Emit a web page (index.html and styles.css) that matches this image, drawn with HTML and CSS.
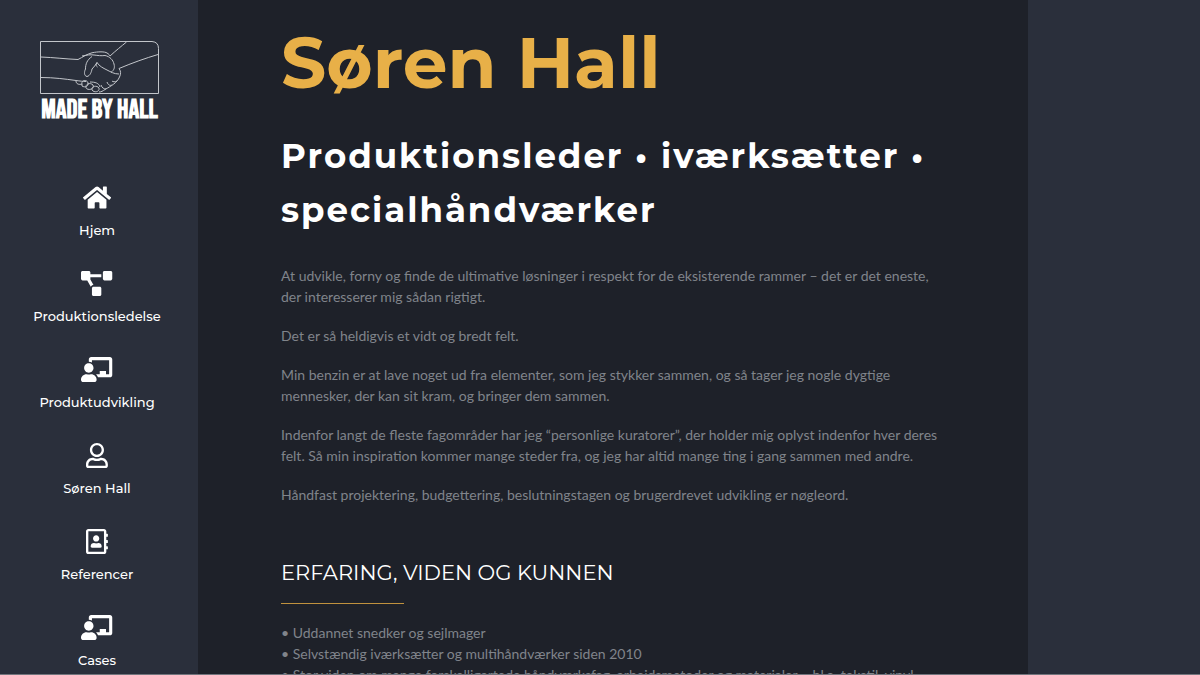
FILE: index.html
```
<!DOCTYPE html>
<html lang="da">
<head>
    <meta charset="UTF-8">
    <meta name="viewport" content="width=device-width, initial-scale=1.0">
    <title>Søren Hall | Made by Hall</title>
    <link rel="stylesheet" href="styles.css">
</head>
<body>
    <div class="layout">
        <aside class="sidebar">
            <a href="#" class="logo">
                <svg class="logo-img" viewBox="0 0 119 53" aria-hidden="true">
                    <path d="M.5 .5H112Q118.500 1 118.500 7.500V52.500H.5Z"/>
                    <path d="M1 16C14 16.500 26 18 38 18.500C43 16 47 13 52 11.800C58 10.500 65 10.500 67 12C69 13 69.500 14 69.500 15"/>
                    <path d="M42 15C47 14 50 13.500 54 14C58 14.500 61 15 65 14.500C70 15.500 73 19 74 23C75 27 74 29 71 31.500"/>
                    <path d="M70 15C76 9.500 81 5.500 86.500 1"/>
                    <path d="M118 13.500C106 17 92 22 79 27.500C81 30 81 33 79.500 36C77 42 71 45 65 48.500C63 50 61 51 59 51"/>
                    <path d="M52 15.500C47 19 45.500 23 45.500 28C44 31 44 35 47 35.500C50 35 51.500 31 52 28C54 26 55.500 24 57 21.500C59 25 63 27 67 29C71 31 74 33 79 33"/>
                    <path d="M57 21.500C55.500 24 56 25 57.500 26"/>
                    <path d="M1 36.500C14 36.500 25 38 36 39.500C40 40 43 40.500 46 40.500"/>
                    <path d="M36 40C36 43 39 44 42 43M42 43C41 39 47 38 48 42C49 45 45 47 42 45V43M46 47C45 43 50 41 53 44C55 48 48 50 46 47M52 49C51 45 57 44 59 47C60 51 54 52 52 49M50 41C55 41 59 42 60 46"/>
                    <path d="M72 40C73 41 75 41 77 40M67 41C68 44 70 45 72 44M61 44C62 47 64 48 66 48"/>
                </svg>
                <span class="logo-text">MADE BY HALL</span>
            </a>

            <nav class="menu">
                <a href="#hjem">
                    <svg viewBox="0 0 576 512" aria-hidden="true"><path d="M280.370 148.260L96 300.110V464a16 16 0 0 0 16 16l112.060-.29a16 16 0 0 0 15.920-16V368a16 16 0 0 1 16-16h64a16 16 0 0 1 16 16v95.640a16 16 0 0 0 16 16.050L464 480a16 16 0 0 0 16-16V300L295.670 148.260a12.190 12.190 0 0 0-15.300 0zM571.600 251.470L488 182.560V44.050a12 12 0 0 0-12-12h-56a12 12 0 0 0-12 12v72.610L318.470 43a48 48 0 0 0-61 0L4.340 251.470a12 12 0 0 0-1.600 16.900l25.500 31A12 12 0 0 0 45.150 301l235.220-193.740a12.190 12.190 0 0 1 15.300 0L530.900 301a12 12 0 0 0 16.900-1.600l25.500-31a12 12 0 0 0-1.700-16.930z"/></svg>
                    <span>Hjem</span>
                </a>
                <a href="#produktionsledelse">
                    <svg viewBox="0 0 640 512" aria-hidden="true"><path d="M384 320H256c-17.670 0-32 14.330-32 32v128c0 17.670 14.330 32 32 32h128c17.670 0 32-14.330 32-32V352c0-17.670-14.330-32-32-32zM192 32c0-17.670-14.330-32-32-32H32C14.330 0 0 14.330 0 32v128c0 17.670 14.330 32 32 32h95.720l73.160 128.040C211.980 300.980 232.400 288 256 288h.28L192 175.510V128h224V64H192V32zM608 0H480c-17.670 0-32 14.330-32 32v128c0 17.670 14.330 32 32 32h128c17.670 0 32-14.330 32-32V32c0-17.670-14.330-32-32-32z"/></svg>
                    <span>Produktionsledelse</span>
                </a>
                <a href="#produktudvikling">
                    <svg viewBox="0 0 640 512" aria-hidden="true"><path d="M208 352c-2.390 0-4.780.35-7.060 1.090C187.980 357.300 174.350 360 160 360s-27.980-2.700-40.950-6.910c-2.280-.74-4.660-1.090-7.050-1.090C49.940 352-.33 402.480 0 464.620.14 490.880 21.730 512 48 512h224c26.270 0 47.860-21.120 48-47.380.33-62.140-49.940-112.620-112-112.620zM160 320c53.020 0 96-42.980 96-96s-42.980-96-96-96-96 42.980-96 96 42.980 96 96 96zM592 0H208c-26.470 0-48 22.250-48 49.590V96c23.420 0 45.100 6.780 64 17.800V64h352v288h-64v-64H384v64h-76.240c19.100 16.690 33.120 38.730 39.690 64H592c26.470 0 48-22.250 48-49.590V49.590C640 22.250 618.470 0 592 0z"/></svg>
                    <span>Produktudvikling</span>
                </a>
                <a href="#soren-hall">
                    <svg viewBox="0 0 448 512" aria-hidden="true"><path d="M313.600 304c-28.700 0-42.500 16-89.600 16s-60.800-16-89.600-16C60.200 304 0 364.200 0 438.400V464c0 26.500 21.500 48 48 48h352c26.500 0 48-21.500 48-48v-25.600c0-74.200-60.200-134.400-134.400-134.400zM400 464H48v-25.600c0-47.600 38.800-86.400 86.400-86.400 14.600 0 38.300 16 89.600 16 51.700 0 74.900-16 89.600-16 47.600 0 86.400 38.800 86.400 86.400V464zM224 288c79.500 0 144-64.500 144-144S303.500 0 224 0 80 64.500 80 144s64.500 144 144 144zm0-240c52.900 0 96 43.100 96 96s-43.100 96-96 96-96-43.100-96-96 43.100-96 96-96z"/></svg>
                    <span>Søren Hall</span>
                </a>
                <a href="#referencer">
                    <svg viewBox="0 0 448 512" aria-hidden="true"><path d="M436 160c6.600 0 12-5.400 12-12v-40c0-6.600-5.400-12-12-12h-20V48c0-26.500-21.500-48-48-48H48C21.500 0 0 21.500 0 48v416c0 26.500 21.500 48 48 48h320c26.500 0 48-21.500 48-48v-48h20c6.600 0 12-5.400 12-12v-40c0-6.600-5.400-12-12-12h-20v-64h20c6.600 0 12-5.400 12-12v-40c0-6.600-5.400-12-12-12h-20v-64h20zm-68 304H48V48h320v416zM208 256c35.300 0 64-28.700 64-64s-28.700-64-64-64-64 28.700-64 64 28.700 64 64 64zm-89.600 128h179.200c12.400 0 22.400-8.600 22.400-19.200v-19.200c0-31.800-30.100-57.600-67.200-57.600-10.800 0-18.700 8-44.800 8-26.900 0-33.400-8-44.800-8-37.100 0-67.200 25.800-67.200 57.600v19.200c0 10.600 10 19.200 22.400 19.200z"/></svg>
                    <span>Referencer</span>
                </a>
                <a href="#cases">
                    <svg viewBox="0 0 640 512" aria-hidden="true"><path d="M208 352c-2.390 0-4.780.35-7.060 1.090C187.980 357.300 174.350 360 160 360s-27.980-2.700-40.950-6.910c-2.280-.74-4.660-1.090-7.050-1.090C49.940 352-.33 402.480 0 464.620.14 490.880 21.730 512 48 512h224c26.270 0 47.860-21.120 48-47.380.33-62.140-49.940-112.620-112-112.620zM160 320c53.020 0 96-42.980 96-96s-42.980-96-96-96-96 42.980-96 96 42.980 96 96 96zM592 0H208c-26.470 0-48 22.250-48 49.590V96c23.420 0 45.100 6.780 64 17.800V64h352v288h-64v-64H384v64h-76.240c19.100 16.690 33.120 38.730 39.690 64H592c26.470 0 48-22.250 48-49.590V49.590C640 22.250 618.470 0 592 0z"/></svg>
                    <span>Cases</span>
                </a>
            </nav>
        </aside>

        <main class="content">
            <h1>Søren Hall</h1>
            <h2>Produktionsleder • iværksætter • specialhåndværker</h2>

            <div class="intro">
                <p>At udvikle, forny og finde de ultimative løsninger i respekt for de eksisterende rammer – det er det eneste, der interesserer mig sådan rigtigt.</p>
                <p>Det er så heldigvis et vidt og bredt felt.</p>
                <p>Min benzin er at lave noget ud fra elementer, som jeg stykker sammen, og så tager jeg nogle dygtige mennesker, der kan sit kram, og bringer dem sammen.</p>
                <p>Indenfor langt de fleste fagområder har jeg “personlige kuratorer”, der holder mig oplyst indenfor hver deres felt. Så min inspiration kommer mange steder fra, og jeg har altid mange ting i gang sammen med andre.</p>
                <p>Håndfast projektering, budgettering, beslutningstagen og brugerdrevet udvikling er nøgleord.</p>
            </div>

            <h3>ERFARING, VIDEN OG KUNNEN</h3>
            <ul class="experience">
                <li>Uddannet snedker og sejlmager</li>
                <li>Selvstændig iværksætter og multihåndværker siden 2010</li>
                <li>Stor viden om mange forskelligartede håndværksfag, arbejdsmetoder og materialer – bl.a. tekstil, vinyl</li>
            </ul>
        </main>
    </div>
</body>
</html>
```
FILE: styles.css
```
:root {
    --bg-side: #2a2f3b;
    --bg-main: #1e2129;
    --gold: #e8b048;
    --text: #80848b;
    --heading-font: Montserrat, Inter, sans-serif;
}
* { box-sizing: border-box; margin: 0; padding: 0; }
body {
    background-color: var(--bg-side);
    color: var(--text);
    font-family: Lato, sans-serif;
    font-size: 14px;
    line-height: 21px;
}
/* thin line along the bottom of the window */
body::after {
    content: ""; position: fixed; left: 0; right: 0; bottom: 0;
    height: 1px; background-color: #72757d;
}
.layout { display: flex; height: 100vh; overflow: hidden; }

.sidebar { flex: 0 0 198px; padding: 41px 4px 0 0; }
.logo {
    display: flex; flex-direction: column; align-items: center;
    margin-left: 5px; color: white; text-decoration: none;
}
.logo-img { width: 119px; height: 53px; fill: none; stroke: #c3c6cb; stroke-width: 1; }
.logo-text {
    margin-top: 4px; font-family: "Bebas Neue", "Liberation Sans Narrow", sans-serif;
    font-size: 27px; font-weight: 700; line-height: 24px; white-space: nowrap;
}
.menu { display: flex; flex-direction: column; gap: 31px; margin-top: 63px; }
.menu a {
    display: flex; flex-direction: column; align-items: center; gap: 10px;
    color: white; text-decoration: none;
    font-family: var(--heading-font); font-size: 13px; font-weight: 500; line-height: 20px;
}
.menu svg { height: 25px; fill: white; }

.content { flex: 0 1 830px; padding: 20px 83px 0; background-color: var(--bg-main); }
h1, h2, h3 { font-family: var(--heading-font); }
h1 { color: var(--gold); font-size: 71px; font-weight: 700; line-height: 86px; }
h2 {
    margin-top: 23px; color: white; font-size: 34px; font-weight: 700;
    line-height: 54px; letter-spacing: 2px;
}
.intro { display: flex; flex-direction: column; gap: 18px; margin-top: 28px; }
h3 { margin-top: 56px; color: white; font-size: 21px; font-weight: 400; line-height: 24px; }
h3::after {
    content: ""; display: block; width: 123px; height: 1px;
    margin-top: 18px; background-color: #c0923e;
}
.experience { margin-top: 18px; list-style: none; }
.experience li::before { content: "• "; }
```
